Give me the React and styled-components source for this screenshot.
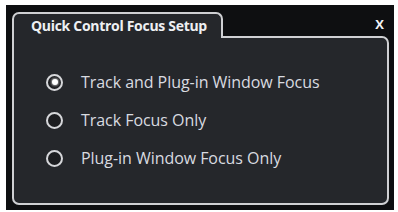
import React, { useState } from "react";
import styled, { createGlobalStyle } from "styled-components";

const Global = createGlobalStyle`
  html, body { margin: 0; padding: 0; background: #ffffff; }
  body { font-family: "Open Sans", "Liberation Sans", sans-serif; }
`;

const Window = styled.div`
  box-sizing: border-box;
  margin: 5px 4px 0 6px;
  width: 388px;
  height: 205px;
  background: #0e0f11;
  padding: 7px 5px 5px 6px;
  display: flex;
  flex-direction: column;
`;

const Header = styled.div`
  display: flex;
  align-items: flex-start;
  justify-content: space-between;
  height: 24px;
  position: relative;
  z-index: 1;
`;

const Tab = styled.div`
  box-sizing: border-box;
  width: 211px;
  height: 26px;
  margin-bottom: -2px;
  border: 2px solid #cfd0d3;
  border-bottom: none;
  border-radius: 7px 7px 0 0;
  background: #25272b;
  color: #eef0f3;
  font-weight: 700;
  font-size: 14px;
  line-height: 18px;
  letter-spacing: -0.3px;
  padding: 3px 0 0 17px;
  white-space: nowrap;
`;

const Close = styled.button`
  background: none;
  border: none;
  color: #f2f4f7;
  font-family: "Open Sans", "Liberation Sans", sans-serif;
  font-weight: 700;
  font-size: 13px;
  line-height: 1;
  padding: 0;
  margin: 6px 5px 0 0;
  cursor: pointer;
`;

const Panel = styled.div`
  box-sizing: border-box;
  flex: 1;
  border: 2px solid #cfd0d3;
  border-radius: 0 7px 7px 7px;
  background: #25272b;
  padding: 33px 0 0 32px;
  display: flex;
  flex-direction: column;
  gap: 16px;
`;

const Option = styled.label`
  display: flex;
  align-items: center;
  gap: 18px;
  height: 22px;
  color: #d9dbe0;
  font-size: 16px;
  letter-spacing: -0.05px;
  cursor: pointer;
`;

const Radio = styled.span`
  box-sizing: border-box;
  flex: none;
  width: 17px;
  height: 17px;
  border-radius: 50%;
  border: 2px solid #d6d7da;
  background: #1c1d20;
  display: flex;
  align-items: center;
  justify-content: center;
  &::after {
    content: "";
    width: 6px;
    height: 6px;
    border-radius: 50%;
    background: ${(p) => (p.$checked ? "#ffffff" : "transparent")};
    box-shadow: ${(p) => (p.$checked ? "0 0 2px 1px rgba(255,255,255,0.5)" : "none")};
  }
`;

const options = [
  "Track and Plug-in Window Focus",
  "Track Focus Only",
  "Plug-in Window Focus Only",
];

export default function App() {
  const [sel, setSel] = useState(0);
  return (
    <>
      <Global />
      <Window>
        <Header>
          <Tab>Quick Control Focus Setup</Tab>
          <Close>X</Close>
        </Header>
        <Panel>
          {options.map((o, i) => (
            <Option key={o} onClick={() => setSel(i)}>
              <Radio $checked={sel === i} />
              {o}
            </Option>
          ))}
        </Panel>
      </Window>
    </>
  );
}
